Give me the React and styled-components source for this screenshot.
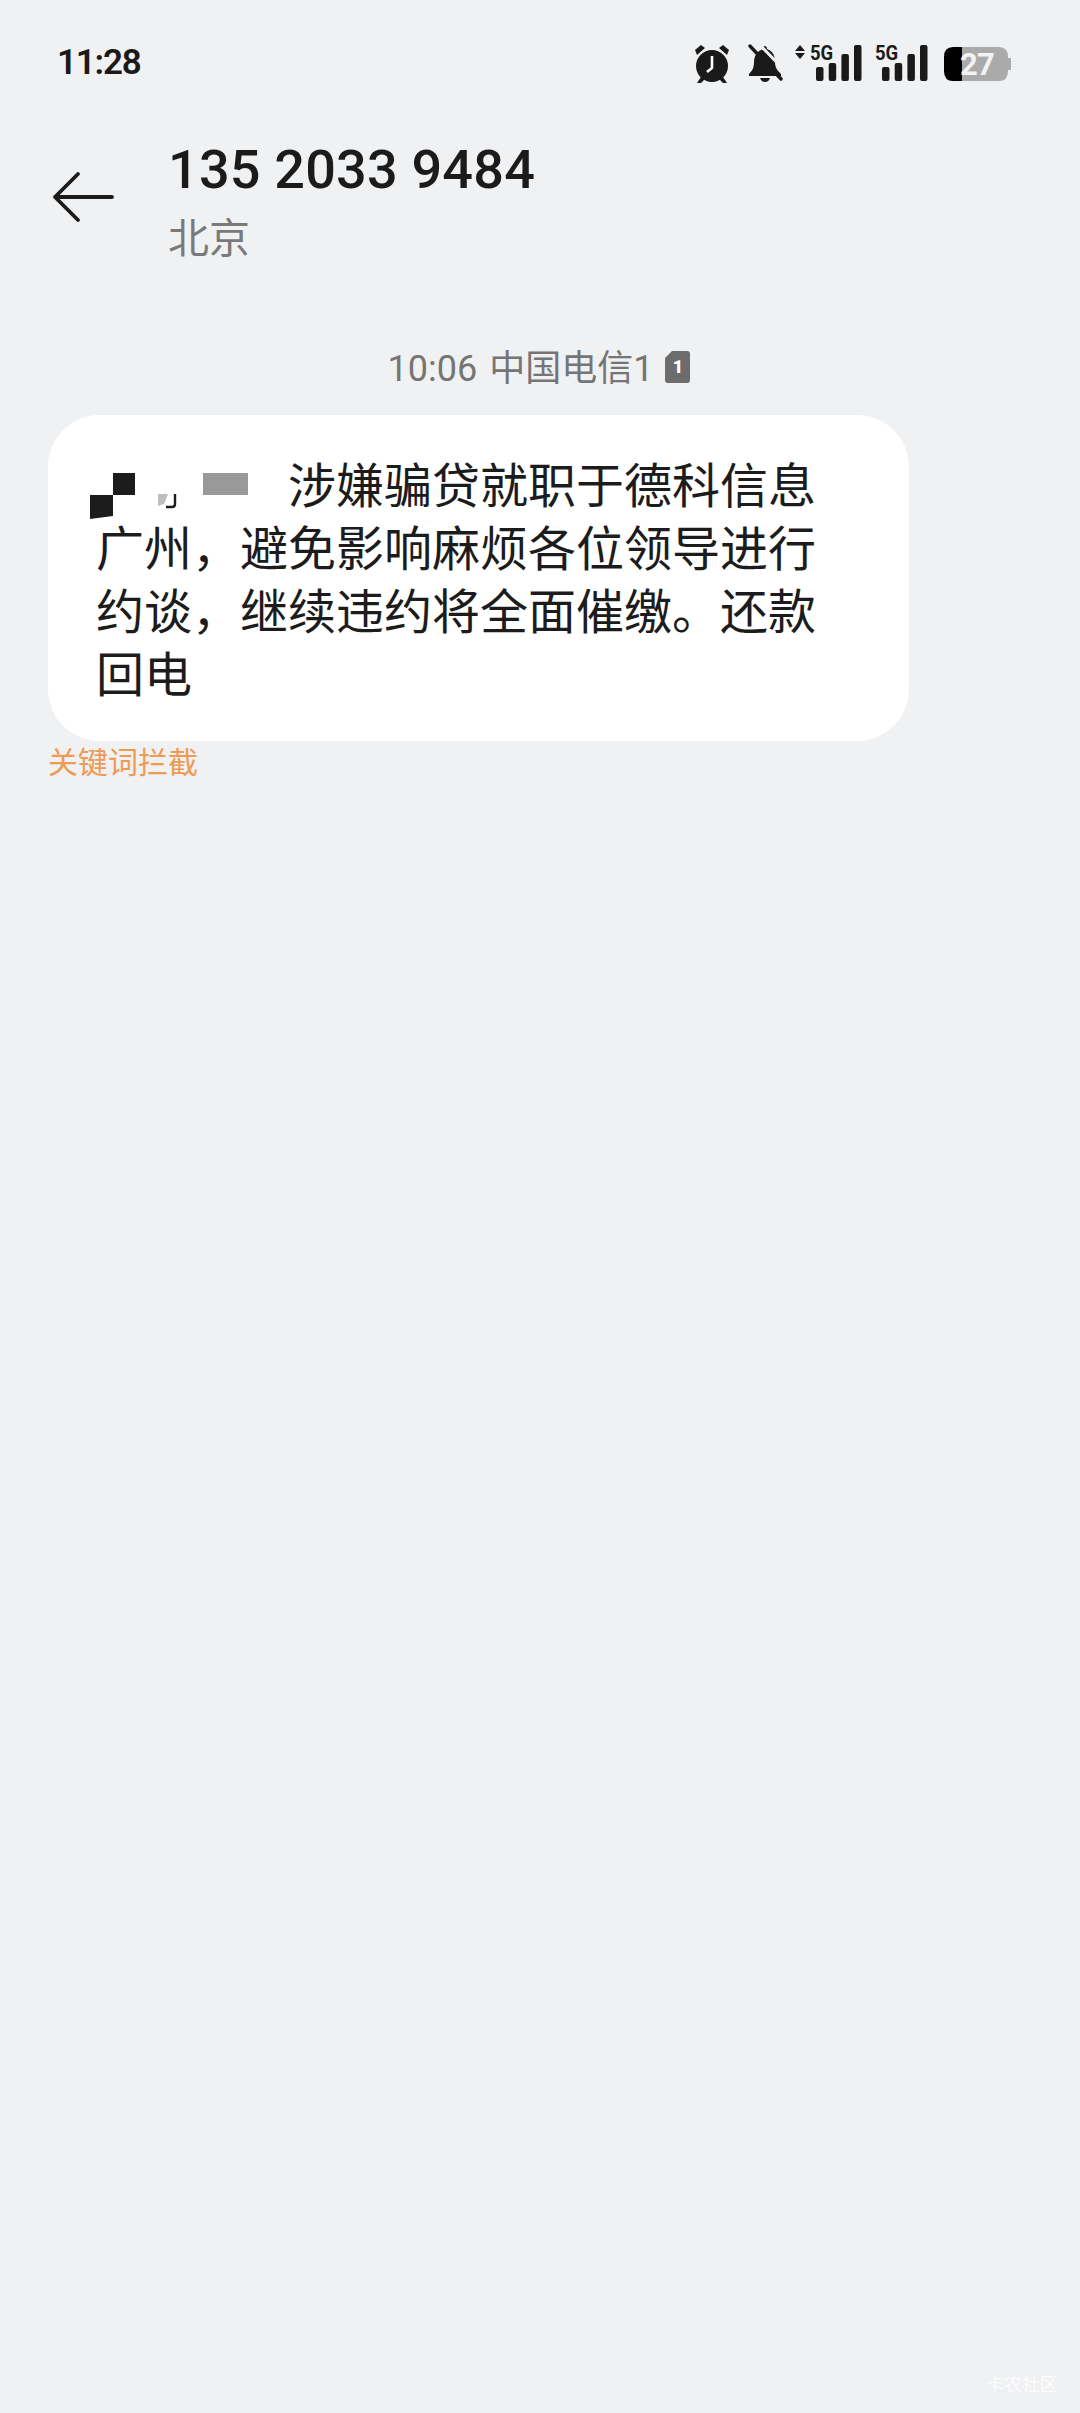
import React from 'react'
import styled, { createGlobalStyle } from 'styled-components'

const GlobalStyle = createGlobalStyle`
    html, body {
        margin: 0;
        padding: 0;
        background: #f0f1f3;
    }
    body {
        font-family: Roboto, "Noto Sans CJK SC", sans-serif;
    }
`

const Page = styled.div`
    position: relative;
    width: 1080px;
    height: 2413px;
    overflow: hidden;
    background: #f0f1f3;
`

const StatusBar = styled.div`
    display: flex;
    align-items: center;
    justify-content: space-between;
    padding: 43px 69px 0 57px;
`

const Clock = styled.div`
    font-size: 35px;
    line-height: 40px;
    font-weight: 600;
    color: #1a1a1a;
    letter-spacing: -1.2px;
`

const StatusIcons = styled.div`
    display: flex;
    align-items: center;
    gap: 10px;
`

const IconSlot = styled.div`
    position: relative;
    display: flex;
    width: ${props => props.width}px;
    height: 40px;
`

const FiveG = styled.span`
    position: absolute;
    top: -2px;
    left: ${props => props.left}px;
    font-size: 21px;
    line-height: 24px;
    font-weight: 700;
    color: #1a1a1a;
    transform: scaleX(0.88);
    transform-origin: left center;
`

const BatteryLevel = styled.span`
    position: absolute;
    top: 4px;
    left: 22px;
    font-size: 31px;
    line-height: 36px;
    font-weight: 700;
    letter-spacing: -0.8px;
    color: #f2f2f2;
`

const Header = styled.div`
    display: flex;
    align-items: flex-start;
    padding: 57px 0 0 52px;
`

const BackButton = styled.div`
    display: flex;
    width: 116px;
    padding-top: 31px;
`

const TitleBlock = styled.div`
    display: flex;
    flex-direction: column;
    gap: 10px;
`

const Phone = styled.div`
    font-size: 54px;
    line-height: 60px;
    font-weight: 500;
    letter-spacing: 0.2px;
    color: #1b1b1b;
`

const Region = styled.div`
    font-family: "Noto Sans CJK SC", sans-serif;
    font-size: 41px;
    line-height: 50px;
    color: #7a7a7a;
`

const Stamp = styled.div`
    display: flex;
    align-items: center;
    justify-content: center;
    gap: 11px;
    margin: 85px 0 0 -1px;
    height: 44px;
    font-size: 36px;
    line-height: 44px;
    color: #757575;
`

const Carrier = styled.span`
    margin-left: 12px;
    font-family: "Noto Sans CJK SC", sans-serif;
`

const Bubble = styled.div`
    box-sizing: border-box;
    width: 861px;
    margin: 26px 0 0 48px;
    padding: 36px 0 38px 48px;
    border-radius: 52px;
    background: #fff;
`

const Message = styled.div`
    width: 722px;
    font-family: "Noto Sans CJK SC", sans-serif;
    font-size: 48px;
    line-height: 63px;
    color: #1c1c1c;
`

const Redaction = styled.svg`
    display: inline-block;
    vertical-align: top;
    overflow: visible;
`

const BlockNote = styled.div`
    margin: -1px 0 0 48px;
    font-family: "Noto Sans CJK SC", sans-serif;
    font-size: 30px;
    line-height: 40px;
    color: #ef9a52;
`

const Watermark = styled.div`
    position: absolute;
    right: 22px;
    bottom: 20px;
    font-family: "Noto Sans CJK SC", sans-serif;
    font-size: 18px;
    line-height: 20px;
    color: rgba(255, 255, 255, 0.85);
`

const SimSlot = styled.div`
    position: relative;
    display: flex;
    width: 27px;
    height: 34px;
`

const SimNumber = styled.span`
    position: absolute;
    top: 6px;
    left: 0;
    width: 27px;
    text-align: center;
    font-size: 18px;
    line-height: 22px;
    font-weight: 900;
    color: #fff;
`

const Alarm = () => (
    <svg width="40" height="40" viewBox="0 0 40 40">
        <circle cx="20" cy="23" r="16" fill="#1a1a1a" />
        <path d="M3 7 L9 2 L13 5 L5 12 Z" fill="#1a1a1a" />
        <path d="M37 7 L31 2 L27 5 L35 12 Z" fill="#1a1a1a" />
        <path d="M9 34 L5 40 H9 L13 36 Z M31 34 L35 40 H31 L27 36 Z" fill="#1a1a1a" />
        <path d="M20 13 V25 L15 29" stroke="#fff" strokeWidth="2.6" fill="none" />
    </svg>
)

const BellMuted = () => (
    <svg width="43" height="40" viewBox="0 0 43 40">
        <path d="M23 3 C24 3 25 4 25 6 C31 8 33 13 33 19 C33 25 36 28 39 31 V33 H7 V31 C10 28 12 25 12 19 C12 13 15 8 21 6 C21 4 22 3 23 3 Z" fill="#1a1a1a" />
        <path d="M18 35 H28 C27 38 25 39 23 39 C21 39 19 38 18 35 Z" fill="#1a1a1a" />
        <path d="M10 0 L42 33" stroke="#f0f1f3" strokeWidth="3" transform="translate(3 -3)" />
        <path d="M8 3 L39 36" stroke="#1a1a1a" strokeWidth="3.4" strokeLinecap="round" />
    </svg>
)

const Bars = ({ x }) => (
    <g fill="#1a1a1a">
        <rect x={x} y="24" width="7.5" height="14" rx="2" />
        <rect x={x + 12.7} y="20" width="7.5" height="18" rx="2" />
        <rect x={x + 25.4} y="11" width="7.5" height="27" rx="2" />
        <rect x={x + 38} y="2" width="7.5" height="36" rx="2" />
    </g>
)

const Signal = ({ arrows }) => {
    const width = arrows ? 67 : 56
    return (
        <IconSlot width={width}>
            <svg width={width} height="40" viewBox={`0 0 ${width} 40`}>
                {arrows && <path d="M5 2 L10 8 H0 Z M5 16 L0 10 H10 Z" fill="#1a1a1a" />}
                <Bars x={arrows ? 21 : 10} />
            </svg>
            <FiveG left={arrows ? 15 : 3}>5G</FiveG>
        </IconSlot>
    )
}

const Battery = () => (
    <IconSlot width={73}>
        <svg width="73" height="40" viewBox="0 0 73 40">
            <path d="M17 4 H61 Q70 4 70 14 V28 Q70 38 61 38 H17 Z" fill="#aaaaaa" />
            <path d="M70 15 H73 V27 H70 Z" fill="#aaaaaa" />
            <path d="M24 4 H15 Q6 4 6 14 V28 Q6 38 15 38 H24 Z" fill="#000" />
        </svg>
        <BatteryLevel>27</BatteryLevel>
    </IconSlot>
)

const BackArrow = () => (
    <svg width="62" height="52" viewBox="0 0 62 52">
        <path d="M3 26 H60 M26 3 L3 26 L26 49" stroke="#1b1b1b" strokeWidth="3.8" strokeLinecap="round" strokeLinejoin="round" fill="none" />
    </svg>
)

const SimBadge = () => (
    <SimSlot>
        <svg width="27" height="34" viewBox="0 0 27 34">
            <path d="M8 1 H23 Q26 1 26 4 V30 Q26 33 23 33 H4 Q1 33 1 30 V8 Z" fill="#6c6c6c" />
        </svg>
        <SimNumber>1</SimNumber>
    </SimSlot>
)

export default function App() {
    return (
        <Page>
            <GlobalStyle />
            <StatusBar>
                <Clock>11:28</Clock>
                <StatusIcons>
                    <Alarm />
                    <BellMuted />
                    <Signal arrows />
                    <Signal />
                    <Battery />
                </StatusIcons>
            </StatusBar>
            <Header>
                <BackButton><BackArrow /></BackButton>
                <TitleBlock>
                    <Phone>135 2033 9484</Phone>
                    <Region>北京</Region>
                </TitleBlock>
            </Header>
            <Stamp>
                <span>10:06<Carrier>中国电信</Carrier>1</span>
                <SimBadge />
            </Stamp>
            <Bubble>
                <Message>
                    <Redaction width="192" height="63" viewBox="0 0 192 63">
                        <rect x="17" y="22" width="22" height="22" fill="#1c1c1c" />
                        <path d="M-6 44 H17 V65 L-6 68 Z" fill="#1c1c1c" />
                        <path d="M62 43 L72 43 L68 53 L62 55 Z" fill="#bdbdbd" />
                        <path d="M79 43 V53 Q79 56 76 56 H70" stroke="#1c1c1c" strokeWidth="2.4" fill="none" />
                        <rect x="107" y="22" width="45" height="22" fill="#999" />
                    </Redaction>
                    涉嫌骗贷就职于德科信息广州，避免影响麻烦各位领导进行约谈，继续违约将全面催缴。还款回电
                </Message>
            </Bubble>
            <BlockNote>关键词拦截</BlockNote>
            <Watermark>卡农社区</Watermark>
        </Page>
    )
}
